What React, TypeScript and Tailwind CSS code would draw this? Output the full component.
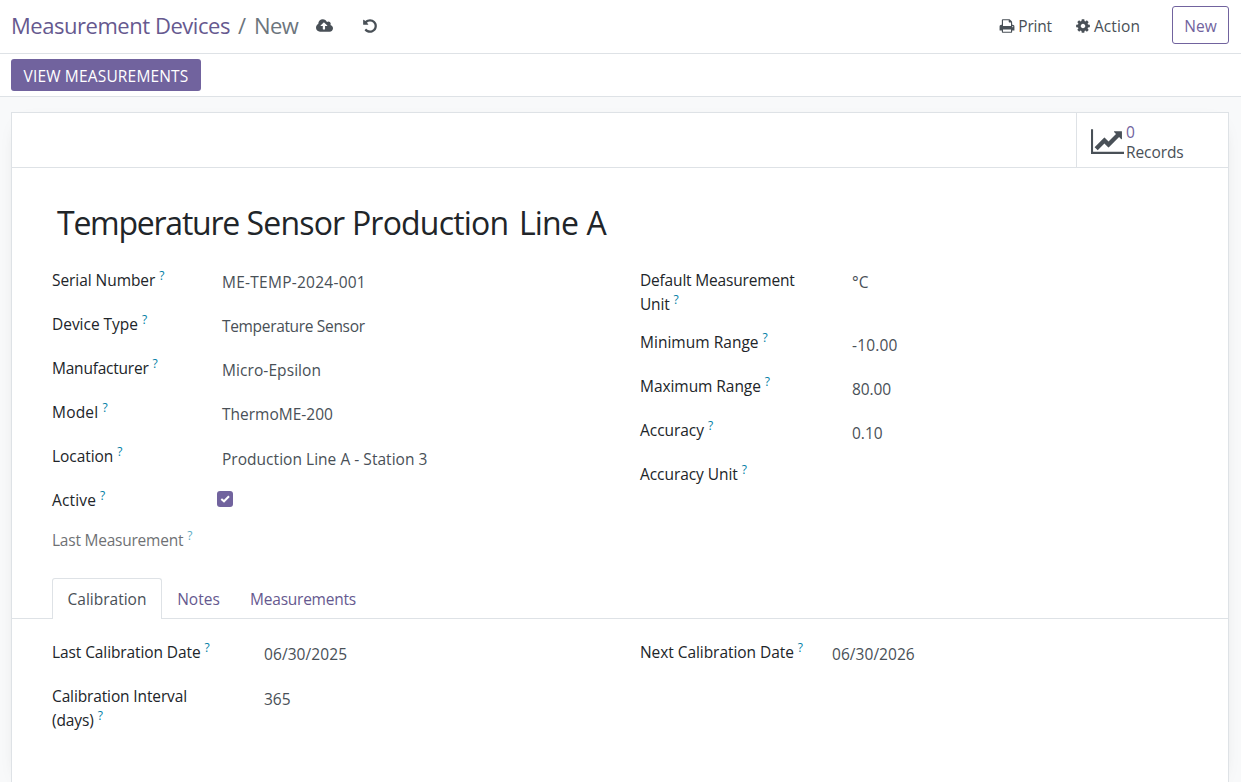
import type { ReactNode } from "react";

const paths = {
  cloud:
    "M1216 864q0-14-9-23l-352-352q-9-9-23-9t-23 9l-351 351q-10 12-10 24 0 14 9 23t23 9h224v352q0 13 9.5 22.5t22.5 9.5h192q13 0 22.5-9.5t9.5-22.5v-352h224q13 0 22.5-9.5t9.5-22.5zm640 288q0 159-112.5 271.5t-271.5 112.5h-1088q-185 0-316.5-131.5t-131.5-316.5q0-130 70-240t188-165q-2-30-2-43 0-212 150-362t362-150q156 0 285.5 87t188.5 231q71-62 166-62 106 0 181 75t75 181q0 76-41 138 130 31 213.5 135.5t83.5 238.5z",
  undo: "M1664 896q0 156-61 298t-164 245-245 164-298 61q-172 0-327-72.5t-264-204.5q-7-10-6.5-22.5t8.5-20.5l137-138q10-9 25-9 16 2 23 12 73 95 179 147t225 52q104 0 198.5-40.5t163.5-109.5 109.5-163.5 40.5-198.5-40.5-198.5-109.5-163.5-163.5-109.5-198.5-40.5q-98 0-188 35.5t-160 101.5l137 138q31 30 14 69-17 40-59 40h-448q-26 0-45-19t-19-45v-448q0-42 40-59 39-17 69 14l130 129q107-101 244.5-156.5t284.5-55.5q156 0 298 61t245 164 164 245 61 298z",
  print:
    "M448 1536h896v-256h-896v256zm0-640h896v-384h-160q-40 0-68-28t-28-68v-160h-640v640zm1152 64q0-26-19-45t-45-19-45 19-19 45 19 45 45 19 45-19 19-45zm128 0v416q0 13-9.5 22.5t-22.5 9.5h-224v160q0 40-28 68t-68 28h-960q-40 0-68-28t-28-68v-160h-224q-13 0-22.5-9.5t-9.5-22.5v-416q0-79 56.5-135.5t135.5-56.5h64v-544q0-40 28-68t68-28h672q40 0 88 20t76 48l152 152q28 28 48 76t20 88v256h64q79 0 135.5 56.5t56.5 135.5z",
  cog: "M1152 896q0-106-75-181t-181-75-181 75-75 181 75 181 181 75 181-75 75-181zm512-109v222q0 12-8 23t-20 13l-185 28q-19 54-39 91 35 50 107 138 10 12 10 25t-9 23q-27 37-99 108t-94 71q-12 0-26-9l-138-108q-44 23-91 38-16 136-29 186-7 28-36 28h-222q-14 0-24.5-8.5t-11.5-21.5l-28-184q-49-16-90-37l-141 107q-10 9-25 9-14 0-25-11-126-114-165-168-7-10-7-23 0-12 8-23 15-21 51-66.5t54-70.5q-27-50-41-99l-183-27q-13-2-21-12.5t-8-23.5v-222q0-12 8-23t19-13l186-28q14-46 39-92-40-57-107-138-10-12-10-24 0-10 9-23 26-36 98.5-107.5t94.5-71.5q13 0 26 10l138 107q44-23 91-38 16-136 29-186 7-28 36-28h222q14 0 24.5 8.5t11.5 21.5l28 184q49 16 90 37l142-107q9-9 24-9 13 0 25 10 129 119 165 170 7 8 7 22 0 12-8 23-15 21-51 66.5t-54 70.5q26 50 41 98l183 28q13 2 21 12.5t8 23.5z",
  chart:
    "M2048 1536v128h-2048v-1536h128v1408h1920zm-128-1248v435q0 21-19.5 29.5t-35.5-7.5l-121-121-633 633q-10 10-23 10t-23-10l-233-233-416 416-192-192 585-585q10-10 23-10t23 10l233 233 464-464-121-121q-16-16-7.5-35.5t29.5-19.5h435q14 0 23 9t9 23z",
};

function Icon({ d, box, className }: { d: string; box: string; className: string }) {
  return (
    <svg viewBox={box} className={`block shrink-0 fill-current ${className}`} aria-hidden="true">
      <path d={d} />
    </svg>
  );
}

type FieldProps = {
  label: string;
  value?: ReactNode;
  row?: string;
  labelWidth?: string;
  gap?: string;
  labelClass?: string;
  valueClass?: string;
};

function Field({
  label,
  value,
  row = "h-11",
  labelWidth = "w-[170px]",
  gap = "pt-0.5",
  labelClass = "tracking-[-0.06px]",
  valueClass = "",
}: FieldProps) {
  return (
    <div className={`flex ${row}`}>
      <div className={`shrink-0 ${labelWidth}`}>
        <div className="max-w-[175px]">
          <span className={`text-[#212529] ${labelClass}`}>{label}</span>
          <span className="ml-1 align-[6px] text-xs leading-none text-[#0180a5]">?</span>
        </div>
      </div>
      <div className={`whitespace-nowrap text-[#495057] ${gap} ${valueClass}`}>{value}</div>
    </div>
  );
}

export default function App() {
  return (
    <div className="flex h-screen flex-col overflow-hidden bg-[#f8f9fa] font-['Open_Sans','Noto_Sans',sans-serif] text-[15.5px] leading-6 text-[#495057]">
      <header className="flex h-[54px] shrink-0 items-center justify-between border-b border-[#dee2e6] bg-white pr-3 pb-[3px] pl-[11px]">
        <div className="flex items-center">
          <div className="flex w-[305px] text-[22px] leading-8 whitespace-nowrap">
            <a className="tracking-[-0.46px] text-[#66598f]">Measurement Devices</a>
            <span className="pr-2 pl-[8px] text-[#6c757d]">/</span>
            <span className="tracking-[-0.6px] text-[#6c757d]">New</span>
          </div>
          <Icon d={paths.cloud} box="-64 0 1920 1792" className="mt-0.5 h-4 w-[17px]" />
          <Icon d={paths.undo} box="0 0 1792 1792" className="mt-0.5 ml-[29px] h-4 w-4" />
        </div>
        <div className="flex items-center">
          <button className="flex items-center gap-[3px]">
            <Icon d={paths.print} box="0 0 1792 1792" className="mt-0.5 h-4 w-4" />
            <span className="pt-px tracking-[-0.2px]">Print</span>
          </button>
          <button className="ml-[23px] flex items-center gap-[3px]">
            <Icon d={paths.cog} box="0 0 1792 1792" className="mt-0.5 h-4 w-4" />
            <span className="pt-px tracking-[0.1px]">Action</span>
          </button>
          <button className="ml-8 flex h-[38px] w-[57px] items-center justify-center rounded-[3px] border border-[#71639e] pt-0.5 text-[#71639e]">
            New
          </button>
        </div>
      </header>

      <div className="flex h-[43px] shrink-0 items-center border-b border-[#dee2e6] bg-white pl-[11px]">
        <button className="flex h-8 w-[190px] items-center justify-center rounded-[3px] bg-[#71639e] pt-0.5 tracking-[0.17px] text-white">
          VIEW MEASUREMENTS
        </button>
      </div>

      <main className="mx-[11px] mr-3 mt-[15px] grow border border-b-0 border-[#dee2e6] bg-white shadow-[0_5px_20px_-15px_rgba(0,0,0,0.4)]">
        <div className="flex h-[55px] justify-end border-b border-[#dee2e6]">
          <button className="flex w-[152px] items-center border-l border-[#dee2e6] pl-3.5 text-left leading-5">
            <Icon d={paths.chart} box="0 0 2048 1792" className="mt-0.5 h-[29px] w-[33px]" />
            <span className="flex flex-col pt-1 pl-0.5">
              <span className="text-[#71639e]">0</span>
              <span className="tracking-[-0.08px]">Records</span>
            </span>
          </button>
        </div>

        <h1 className="mt-[31px] pl-[45px] text-[32px] leading-[48px] font-normal tracking-[-0.8px] text-[#212529]">
          <span className="tracking-[-1.25px]">Temperature</span> Sensor Production{" "}
          <span className="ml-[3px] [word-spacing:1px]">Line A</span>
        </h1>

        <section className="mt-[21px] grid h-[310px] grid-cols-[588px_1fr] pl-10">
          <div>
            <Field label="Serial Number" value="ME-TEMP-2024-001" valueClass="tracking-[0.25px]" />
            <Field label="Device Type" labelClass="tracking-[-0.03px]" value="Temperature Sensor" valueClass="tracking-[-0.33px]" />
            <Field label="Manufacturer" labelClass="tracking-[-0.22px]" value="Micro-Epsilon" valueClass="tracking-[0.08px]" />
            <Field label="Model" labelClass="tracking-[0.2px]" value="ThermoME-200" />
            <Field label="Location" labelClass="tracking-[-0.05px]" gap="pt-[3px]" value="Production Line A - Station 3" valueClass="tracking-[0.03px]" />
            <Field
              label="Active"
              labelClass="tracking-[0.15px]"
              row="h-10"
              labelWidth="w-[165px]"
              gap="pt-[3px]"
              value={
                <span className="flex h-4 w-4 items-center justify-center rounded-[3px] bg-[#71639e]">
                  <svg viewBox="0 0 16 16" className="h-4 w-4 fill-none stroke-white stroke-2">
                    <path d="M4.3 7.9 7 10.3 12 5.3" />
                  </svg>
                </span>
              }
            />
            <div className="opacity-65">
              <Field label="Last Measurement" labelClass="tracking-[-0.23px]" />
            </div>
          </div>
          <div>
            <Field label="Default Measurement Unit" labelClass="tracking-[-0.18px]" row="h-[62px]" labelWidth="w-[212px]" value="°C" />
            <Field label="Minimum Range" labelClass="tracking-[0.02px]" labelWidth="w-[212px]" gap="pt-[3px]" value="-10.00" valueClass="tracking-[0.15px]" />
            <Field label="Maximum Range" labelWidth="w-[212px]" gap="pt-[3px]" value="80.00" valueClass="tracking-[-0.1px]" />
            <Field label="Accuracy" labelClass="tracking-[-0.05px]" labelWidth="w-[212px]" gap="pt-[3px]" value="0.10" />
            <Field label="Accuracy Unit" labelWidth="w-[212px]" />
          </div>
        </section>

        <nav className="flex h-[41px] items-stretch">
          <div className="w-10 border-b border-[#dee2e6]" />
          <button className="w-[110px] rounded-t-[3px] border border-b-0 border-[#dee2e6]">Calibration</button>
          <button className="w-[73px] border-b border-[#dee2e6] pt-px text-[#66598f]">Notes</button>
          <button className="w-[136px] border-b border-[#dee2e6] pt-px tracking-[-0.24px] text-[#66598f]">Measurements</button>
          <div className="grow border-b border-[#dee2e6]" />
        </nav>

        <section className="mt-[21px] grid grid-cols-[588px_1fr] pl-10">
          <div>
            <Field label="Last Calibration Date" labelClass="tracking-[-0.1px]" labelWidth="w-[212px]" value="06/30/2025" valueClass="tracking-[0.08px]" />
            <Field label="Calibration Interval (days)" labelClass="tracking-[-0.13px]" row="h-12" labelWidth="w-[212px]" gap="pt-[3px]" value="365" />
          </div>
          <div>
            <Field label="Next Calibration Date" labelWidth="w-[192px]" value="06/30/2026" valueClass="tracking-[0.05px]" />
          </div>
        </section>
      </main>
    </div>
  );
}
